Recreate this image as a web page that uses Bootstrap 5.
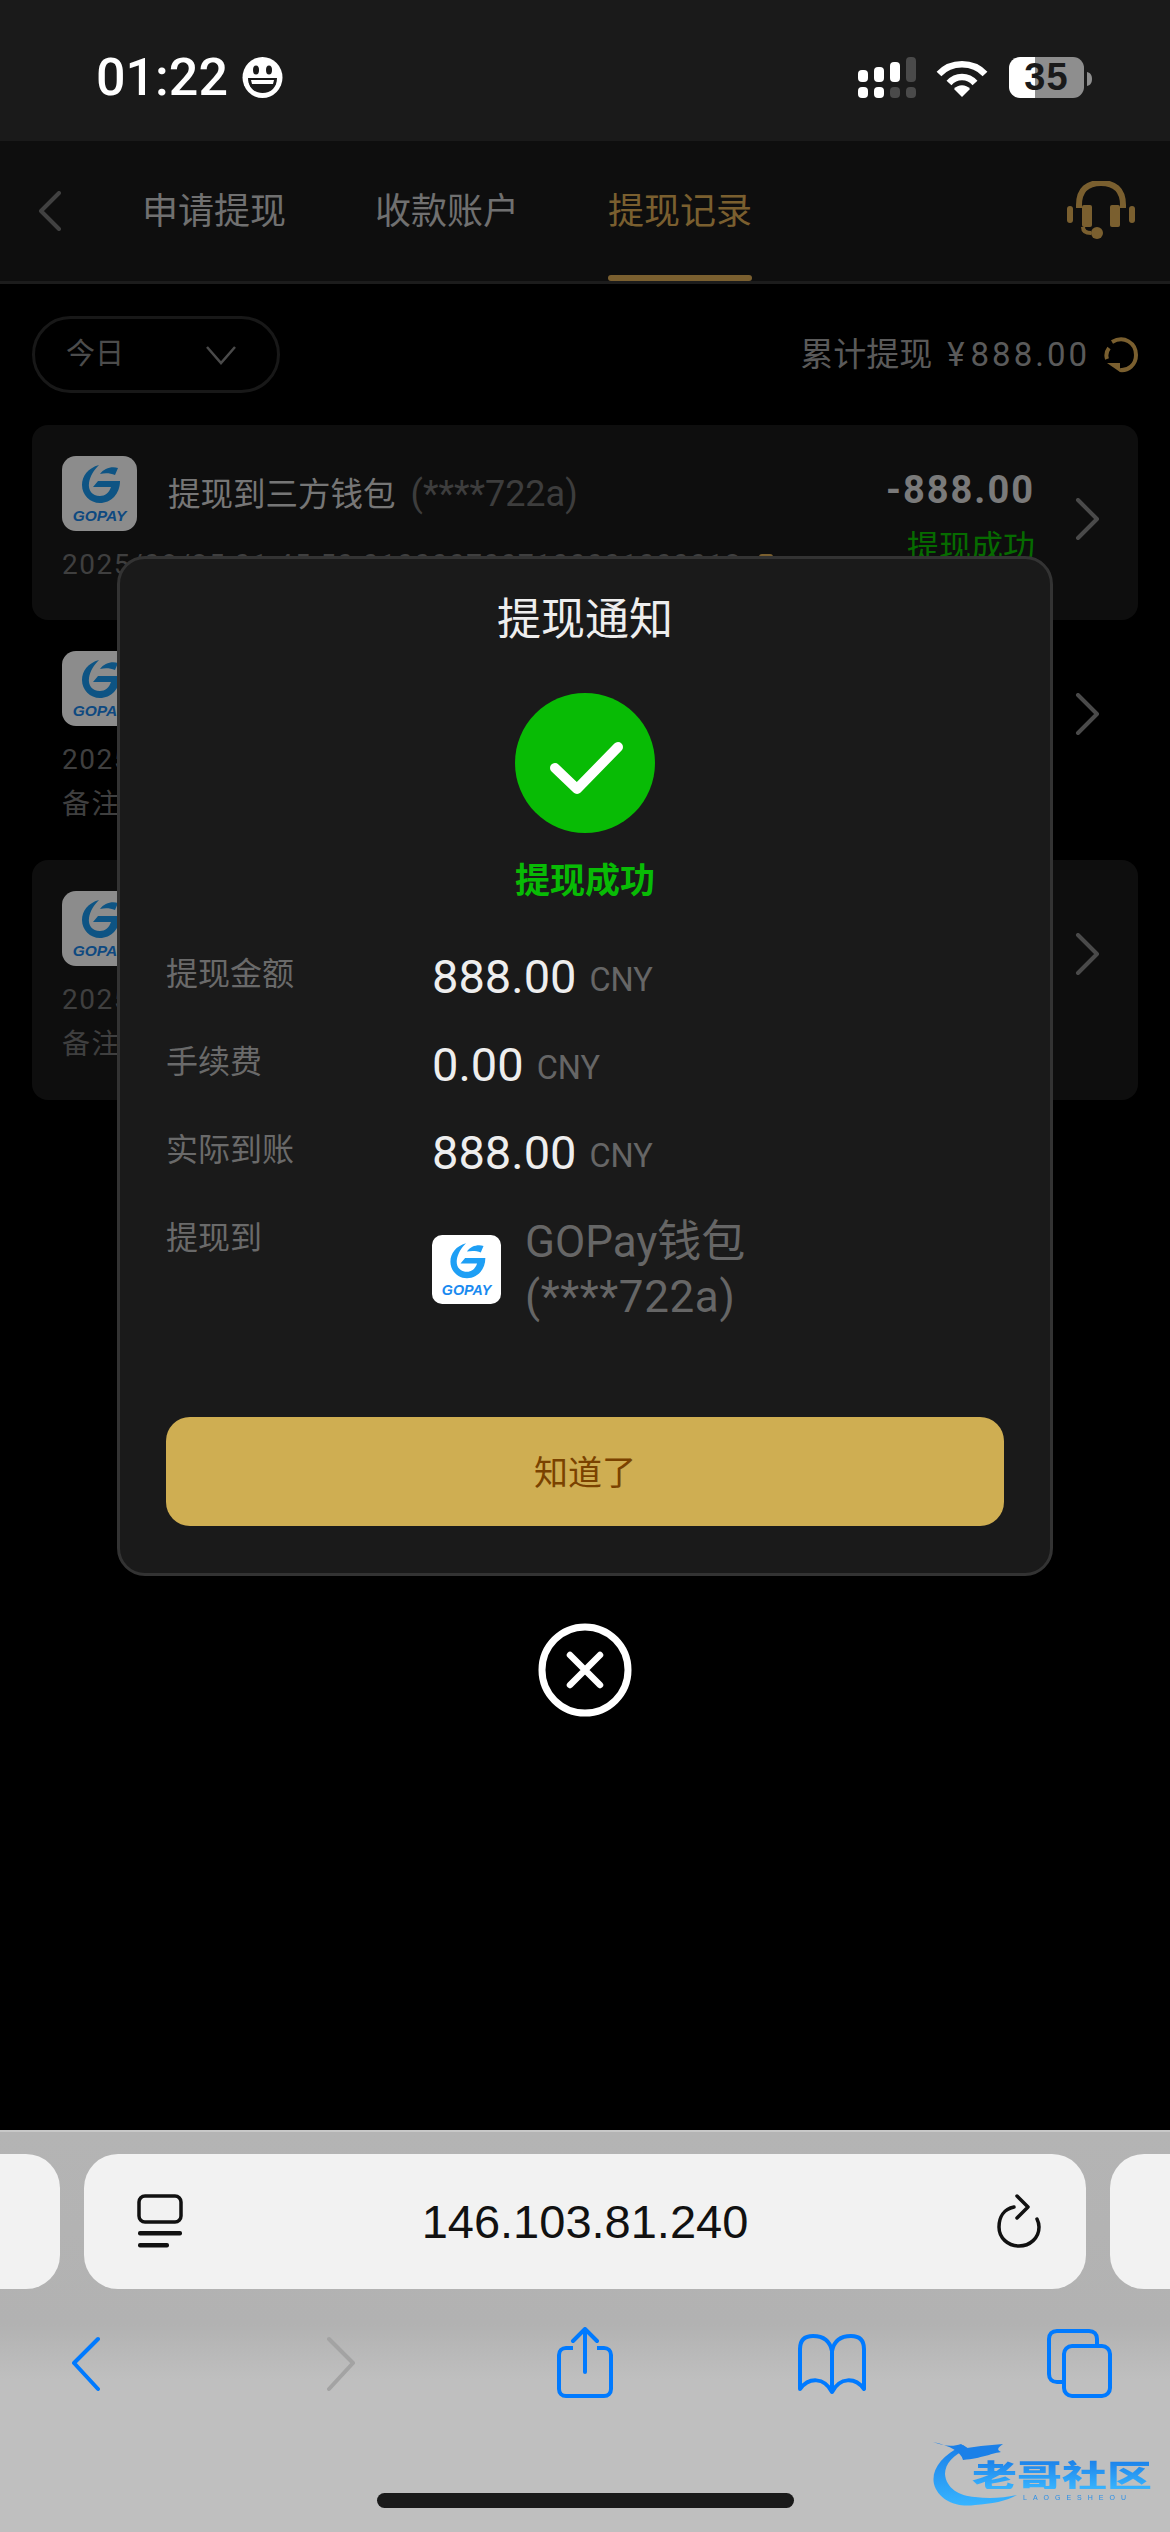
<!DOCTYPE html>
<html lang="zh-CN">
<head>
<meta charset="utf-8">
<title>提现记录</title>
<link href="https://cdn.jsdelivr.net/npm/bootstrap@5.3.0/dist/css/bootstrap.min.css" rel="stylesheet">
<style>
html,body{margin:0;background:#000}
body{width:1170px;height:2532px;overflow:hidden;font-family:Roboto,"Noto Sans CJK SC",sans-serif;color:#ddd}
svg{display:block;flex-shrink:0}
.shell{width:1170px;height:2532px}
.stat-bar{height:141px;background:#1a1a1a;padding:57px 0 0 96px;flex-shrink:0}
.clock{font:500 52px/41px Roboto,sans-serif;color:#fff;width:146px}
.batt{width:75px;height:41px;border-radius:11px;background:linear-gradient(90deg,#fff 0 26px,#8e8e8e 26px);color:#1a1a1a;font:700 38px/41px "Liberation Sans",sans-serif;letter-spacing:1px;text-align:center}
.main-area{height:1989px}
.top-nav{height:143px;background:#1a1a1a;border-bottom:3px solid #333;flex-shrink:0;padding:0 35px 0 38px}
.tab-item{font-size:36px;line-height:50px;color:#ccc;width:144px;margin-right:89px;white-space:nowrap;height:140px;padding-top:46px;position:relative}
.tab-on{color:#deae57}
.tab-on::after{content:"";position:absolute;left:0;right:0;bottom:0;height:6px;border-radius:3px;background:#deae57}
.filter-row{padding:32px 32px 32px}
.pill-select{width:248px;height:77px;border:3px solid #2c2c2c;border-radius:39px;padding:0 40px 0 31px;color:#8a8a8a;font-size:29px}
.sum-text{font-size:33px;color:#a5a5a5;line-height:40px}
.sum-num{letter-spacing:3px;margin-left:6px}
.rec-list{margin:0 32px}
.rec-row{padding:31px 38px 35px 30px;border-radius:16px}
.rec-row.tone{background:#1a1a1a}
.ico-box{width:75px;height:75px}
.rec-title{font-size:32.500px;line-height:40px;color:#d8d8d8;margin-left:31px;margin-top:18px;white-space:nowrap}
.rec-title span{color:#707070;font-size:36px;margin-left:7px}
.rec-line{font-size:28px;line-height:40px;color:#737373;letter-spacing:1.500px;white-space:nowrap;margin-top:14px}
.rec-line+.rec-line{margin-top:5px}
.rec-amt{font:700 38px/44px Roboto,sans-serif;color:#dedede;margin-top:12px;letter-spacing:2px}
.rec-stat{font-size:32px;line-height:40px;color:#0cc300;margin-top:15px}
.chev-r{margin:42px 0 0 40px}
.scrim{background:rgba(0,0,0,.45);padding-top:415px}
.dialog{width:936px;height:1020px;background:#1a1a1a;border:3px solid #333;border-radius:28px;padding:31px 46px 0}
.dlg-title{font-size:44px;line-height:60px;color:#eee;text-align:center}
.ok-ring{margin:43px auto 0}
.ok-text{font-size:35px;line-height:50px;font-weight:700;color:#08bb05;text-align:center;margin:24px 0 43px}
.info-row{height:88px}
.info-key{width:266px;font-size:32px;line-height:44px;color:#6a6a6a;flex-shrink:0;padding-top:2px}
.info-val{font:400 47px/54px Roboto,sans-serif;color:#eee}
.info-unit{font:400 32.500px/54px Roboto,sans-serif;color:#666;margin-left:13px;padding-top:3px}
.info-wallet{font-size:44px;line-height:55px;color:#666;margin-left:24px;padding-top:1px}
.masked-id{letter-spacing:.6px}
.know-btn{height:109px;margin-top:92px;padding-top:9px;background:#cfae52;border:0;border-radius:24px;color:#7a4200;font-size:34px}
.know-btn:hover{background:#cfae52;color:#7a4200}
.close-x{margin-top:47px}
.safari{height:402px;background:linear-gradient(#b4b4b4,#b2b2b2 48%,#bfbfbf 62%);border-top:2px solid #c8c8c8;position:relative;flex-shrink:0;overflow:hidden}
.tab-strip{padding-top:22px;gap:24px}
.addr-side{width:100px;height:135px;background:#f2f2f2;border-radius:34px;flex-shrink:0}
.addr-pill{width:1002px;height:135px;background:#f2f2f2;border-radius:34px;flex-shrink:0;padding:0 44px 0 53px}
.addr-text{font:400 47px/60px "Liberation Sans",sans-serif;color:#111;margin-right:9px}
.tool-row{margin-top:38px}
.m-a{margin-left:72px}.m-b{margin-left:227px}.m-c{margin-left:202px}.m-d{margin-left:184px}.m-e{margin-left:180px}
.home-bar{position:absolute;left:377px;top:361px;width:417px;height:15px;border-radius:8px;background:#1a1a1a}
.wm{position:absolute;left:931px;top:306px;width:230px;height:70px;filter:blur(.7px)}
.wm-art{position:absolute;left:0;top:0}
.wm-cn{position:absolute;left:41px;top:21px;font:900 45px/44px "Noto Sans CJK SC",sans-serif;white-space:nowrap;transform:scaleY(.68);transform-origin:0 0;background:linear-gradient(#1b7fe8,#37b4ff);-webkit-background-clip:text;background-clip:text;color:transparent}
.wm-en{position:absolute;left:92px;top:55px;font:400 7px/9px "Liberation Sans",sans-serif;letter-spacing:6px;color:#2a8fe8;white-space:nowrap}
</style>
</head>
<body>
<div class="shell d-flex flex-column">
  <div class="stat-bar d-flex">
    <div class="clock">01:22</div>
    <svg width="41" height="41" viewBox="0 0 41 41"><ellipse cx="20.500" cy="20.500" rx="20" ry="20.500" fill="#fff"/><ellipse cx="14" cy="13" rx="3" ry="4.500" fill="#1a1a1a"/><ellipse cx="27" cy="13" rx="3" ry="4.500" fill="#1a1a1a"/><path d="M6 21H35C35 30 29 36 20.500 36S6 30 6 21Z" fill="#1a1a1a"/><path d="M9 23H32L31 27H10Z" fill="#fff"/></svg>
    <svg class="ms-auto" width="60" height="42" viewBox="0 0 60 42" style="margin-right:20px">
      <rect x="2" y="13" width="10" height="12" rx="4" fill="#fff"/><rect x="18" y="10" width="10" height="15" rx="4" fill="#fff"/><rect x="34" y="5" width="10" height="20" rx="4" fill="#fff"/><rect x="50" y="0" width="10" height="25" rx="4" fill="#4a4a4a"/>
      <rect x="2" y="30" width="10" height="11" rx="4" fill="#fff"/><rect x="18" y="30" width="10" height="11" rx="4" fill="#fff"/><rect x="34" y="30" width="10" height="11" rx="4" fill="#4a4a4a"/><rect x="50" y="30" width="10" height="11" rx="4" fill="#4a4a4a"/>
    </svg>
    <svg width="52" height="40" viewBox="0 0 52 40" style="margin-right:21px;margin-top:2px"><path d="M3 15C15 2 37 2 49 15" fill="none" stroke="#fff" stroke-width="6.500" stroke-linecap="butt"/><path d="M13 24C20 16 32 16 39 24" fill="none" stroke="#fff" stroke-width="6.500"/><path d="M18 30C22 25 30 25 34 30L26 38Z" fill="#fff"/></svg>
    <div class="batt">35</div>
    <svg width="6" height="14" viewBox="0 0 6 14" style="margin:15px 77px 0 3px"><path d="M0 0C4 1 5 4 5 7S4 13 0 14Z" fill="#8e8e8e"/></svg>
  </div>

  <div class="main-area position-relative">
    <div class="top-nav d-flex align-items-start">
      <svg width="24" height="40" viewBox="0 0 24 40" style="margin:50px 80px 0 0"><path d="M21 2 3 20 21 38" fill="none" stroke="#777" stroke-width="4" stroke-linecap="round" stroke-linejoin="round"/></svg>
      <div class="tab-item">申请提现</div>
      <div class="tab-item">收款账户</div>
      <div class="tab-item tab-on">提现记录</div>
      <svg class="ms-auto" width="68" height="60" viewBox="0 0 68 60" style="margin-top:40px">
        <path d="M12 27V24C12 8 21 2 34 2S56 8 56 24V27" fill="none" stroke="#deae57" stroke-width="6"/>
        <rect x="15" y="24" width="10" height="22" rx="2" fill="#deae57"/><rect x="43" y="24" width="10" height="22" rx="2" fill="#deae57"/>
        <rect x="0" y="25" width="6" height="17" rx="3" fill="#deae57"/><rect x="62" y="25" width="6" height="17" rx="3" fill="#deae57"/>
        <path d="M16 46C16 50 19 52 24 52" fill="none" stroke="#deae57" stroke-width="4"/><circle cx="30" cy="52" r="6" fill="#deae57"/>
      </svg>
    </div>

    <div class="filter-row d-flex align-items-center justify-content-between">
      <div class="pill-select d-flex align-items-center justify-content-between">
        <span>今日</span>
        <svg width="32" height="20" viewBox="0 0 32 20"><path d="M2 2 16 18 30 2" fill="none" stroke="#888" stroke-width="2.500"/></svg>
      </div>
      <div class="d-flex align-items-center">
        <span class="sum-text">累计提现</span>
        <span class="sum-text" style="margin-left:15px">¥</span>
        <span class="sum-text sum-num">888.00</span>
        <svg width="34" height="36" viewBox="0 0 34 36" style="margin-left:14px"><path d="M8 5C20 -2 32 6 32 18C32 28 24 34 16 33" fill="none" stroke="#deae57" stroke-width="4"/><path d="M5 11C2 15 2 19 3 22" fill="none" stroke="#deae57" stroke-width="4"/><path d="M3 26 16 26 16 35Z" fill="#deae57"/></svg>
      </div>
    </div>

    <div class="rec-list">
      <div class="rec-row tone d-flex align-items-start">
        <div class="flex-grow-1">
          <div class="d-flex align-items-start">
            <svg class="ico-box" viewBox="0 0 75 75"><rect width="75" height="75" rx="14" fill="#fff"/><path d="M37 9C26 12 20 20 20 29C20 39 28 47 38 47C49 47 58 38 58 25L36 25 31 31 49 31C47 37 43 40 38 40C30 40 26 34 27 27C28 20 32 14 37 9Z" fill="#1b9af0"/><path d="M38 18C42 12 50 10 56 12L53 19C48 17 43 17 38 18Z" fill="#1b9af0"/><text x="37.500" y="65" text-anchor="middle" font-family="Liberation Sans" font-weight="700" font-style="italic" font-size="15.500" fill="#1a86ea">GOPAY</text></svg>
            <div class="rec-title">提现到三方钱包 <span>(****722a)</span></div>
          </div>
          <div class="rec-line d-flex align-items-start">2025/08/25 01:45:50 0100007007100001000012<svg width="16" height="22" viewBox="0 0 16 22" style="margin:8px 0 0 16px"><rect x="1" y="1" width="14" height="20" rx="3" fill="#deae57"/></svg></div>
        </div>
        <div class="text-end">
          <div class="rec-amt">-888.00</div>
          <div class="rec-stat">提现成功</div>
        </div>
        <svg class="chev-r" width="25" height="42" viewBox="0 0 25 42"><path d="M3 2 22 21 3 40" fill="none" stroke="#888" stroke-width="4" stroke-linecap="round" stroke-linejoin="round"/></svg>
      </div>

      <div class="rec-row d-flex align-items-start">
        <div class="flex-grow-1">
          <div class="d-flex align-items-start">
            <svg class="ico-box" viewBox="0 0 75 75"><rect width="75" height="75" rx="14" fill="#fff"/><path d="M37 9C26 12 20 20 20 29C20 39 28 47 38 47C49 47 58 38 58 25L36 25 31 31 49 31C47 37 43 40 38 40C30 40 26 34 27 27C28 20 32 14 37 9Z" fill="#1b9af0"/><path d="M38 18C42 12 50 10 56 12L53 19C48 17 43 17 38 18Z" fill="#1b9af0"/><text x="37.500" y="65" text-anchor="middle" font-family="Liberation Sans" font-weight="700" font-style="italic" font-size="15.500" fill="#1a86ea">GOPAY</text></svg>
            <div class="rec-title">提现到三方钱包 <span>(****722a)</span></div>
          </div>
          <div class="rec-line">2025/08/25 01:30:12</div>
          <div class="rec-line">备注</div>
        </div>
        <div class="text-end">
          <div class="rec-amt">-888.00</div>
          <div class="rec-stat">提现成功</div>
        </div>
        <svg class="chev-r" width="25" height="42" viewBox="0 0 25 42"><path d="M3 2 22 21 3 40" fill="none" stroke="#888" stroke-width="4" stroke-linecap="round" stroke-linejoin="round"/></svg>
      </div>

      <div class="rec-row tone d-flex align-items-start">
        <div class="flex-grow-1">
          <div class="d-flex align-items-start">
            <svg class="ico-box" viewBox="0 0 75 75"><rect width="75" height="75" rx="14" fill="#fff"/><path d="M37 9C26 12 20 20 20 29C20 39 28 47 38 47C49 47 58 38 58 25L36 25 31 31 49 31C47 37 43 40 38 40C30 40 26 34 27 27C28 20 32 14 37 9Z" fill="#1b9af0"/><path d="M38 18C42 12 50 10 56 12L53 19C48 17 43 17 38 18Z" fill="#1b9af0"/><text x="37.500" y="65" text-anchor="middle" font-family="Liberation Sans" font-weight="700" font-style="italic" font-size="15.500" fill="#1a86ea">GOPAY</text></svg>
            <div class="rec-title">提现到三方钱包 <span>(****722a)</span></div>
          </div>
          <div class="rec-line">2025/08/25 01:12:08</div>
          <div class="rec-line">备注</div>
        </div>
        <div class="text-end">
          <div class="rec-amt">-888.00</div>
          <div class="rec-stat">提现成功</div>
        </div>
        <svg class="chev-r" width="25" height="42" viewBox="0 0 25 42"><path d="M3 2 22 21 3 40" fill="none" stroke="#888" stroke-width="4" stroke-linecap="round" stroke-linejoin="round"/></svg>
      </div>
    </div>

    <div class="scrim position-absolute top-0 start-0 w-100 h-100 d-flex flex-column align-items-center">
      <div class="dialog flex-shrink-0">
        <div class="dlg-title">提现通知</div>
        <svg class="ok-ring" width="140" height="140" viewBox="0 0 140 140"><circle cx="70" cy="70" r="70" fill="#08bb05"/><path d="M40 75 62 96 103 54" fill="none" stroke="#fff" stroke-width="10" stroke-linecap="round" stroke-linejoin="round"/></svg>
        <div class="ok-text">提现成功</div>
        <div class="info-row d-flex"><div class="info-key">提现金额</div><div class="info-val">888.00</div><div class="info-unit">CNY</div></div>
        <div class="info-row d-flex"><div class="info-key">手续费</div><div class="info-val">0.00</div><div class="info-unit">CNY</div></div>
        <div class="info-row d-flex"><div class="info-key">实际到账</div><div class="info-val">888.00</div><div class="info-unit">CNY</div></div>
        <div class="d-flex align-items-start">
          <div class="info-key">提现到</div>
          <svg width="69" height="69" viewBox="0 0 75 75" style="margin-top:21px"><rect width="75" height="75" rx="11" fill="#fff"/><path d="M37 9C26 12 20 20 20 29C20 39 28 47 38 47C49 47 58 38 58 25L36 25 31 31 49 31C47 37 43 40 38 40C30 40 26 34 27 27C28 20 32 14 37 9Z" fill="#1e9ff5"/><path d="M38 18C42 12 50 10 56 12L53 19C48 17 43 17 38 18Z" fill="#1e9ff5"/><text x="37.500" y="65" text-anchor="middle" font-family="Liberation Sans" font-weight="700" font-style="italic" font-size="15.500" fill="#1a8af0">GOPAY</text></svg>
          <div class="info-wallet">GOPay钱包<br><span class="masked-id">(****722a)</span></div>
        </div>
        <button type="button" class="btn know-btn w-100">知道了</button>
      </div>
      <svg class="close-x" width="94" height="94" viewBox="0 0 94 94"><circle cx="47" cy="47" r="43" fill="none" stroke="#fff" stroke-width="7"/><path d="M32 32 62 62M62 32 32 62" stroke="#fff" stroke-width="6.500" stroke-linecap="round"/></svg>
    </div>
  </div>

  <div class="safari">
    <div class="tab-strip d-flex justify-content-center">
      <div class="addr-side"></div>
      <div class="addr-pill d-flex align-items-center justify-content-between">
        <svg width="46" height="56" viewBox="0 0 46 56"><rect x="2" y="2" width="42" height="26" rx="6" fill="none" stroke="#111" stroke-width="3.500"/><rect x="1" y="37" width="44" height="4.500" rx="2" fill="#111"/><rect x="1" y="49" width="31" height="4.500" rx="2" fill="#111"/></svg>
        <div class="addr-text">146.103.81.240</div>
        <svg width="46" height="56" viewBox="0 0 46 56"><path d="M18 13C8 15 3 23 3 33C3 44 12 52 23 52S43 44 43 33C43 30 42 27 41 25" fill="none" stroke="#111" stroke-width="3.500" stroke-linecap="round"/><path d="M21 2 32 13 21 24" fill="none" stroke="#111" stroke-width="3.500" stroke-linecap="round" stroke-linejoin="round"/></svg>
      </div>
      <div class="addr-side"></div>
    </div>
    <div class="tool-row d-flex align-items-start">
      <svg class="m-a" width="28" height="71" viewBox="0 0 28 71"><path d="M26 12 2 36 26 62" fill="none" stroke="#007aff" stroke-width="4" stroke-linecap="round" stroke-linejoin="round"/></svg>
      <svg class="m-b" width="28" height="71" viewBox="0 0 28 71"><path d="M2 12 26 36 2 62" fill="none" stroke="#a3a3a3" stroke-width="4" stroke-linecap="round" stroke-linejoin="round"/></svg>
      <svg class="m-c" width="56" height="71" viewBox="0 0 56 71"><path d="M16 21H9C5 21 2 24 2 28V62C2 66 5 69 9 69H47C51 69 54 66 54 62V28C54 24 51 21 47 21H40" fill="none" stroke="#007aff" stroke-width="4"/><path d="M28 45V2M16 14 28 2 40 14" fill="none" stroke="#007aff" stroke-width="4" stroke-linecap="round" stroke-linejoin="round"/></svg>
      <svg class="m-d" width="70" height="71" viewBox="0 0 70 71"><path d="M35 24C33 14 26 9 16 9C8 9 3 13 3 22V62C12 50 27 50 35 65C43 50 58 50 67 62V22C67 13 62 9 54 9C44 9 37 14 35 24ZM35 24V65" fill="none" stroke="#007aff" stroke-width="4" stroke-linejoin="round"/></svg>
      <svg class="m-e" width="65" height="71" viewBox="0 0 65 71"><path d="M16 55H10C5 55 2 52 2 47V12C2 7 5 4 10 4H42C47 4 50 7 50 12V19" fill="none" stroke="#007aff" stroke-width="4"/><rect x="17" y="19" width="46" height="50" rx="8" fill="none" stroke="#007aff" stroke-width="4"/></svg>
    </div>
    <div class="home-bar"></div>
    <div class="wm">
      <svg class="wm-art" width="92" height="70" viewBox="0 0 92 70"><defs><linearGradient id="wmg" x1="0" y1="0" x2="0" y2="1"><stop offset="0" stop-color="#1b7fe8"/><stop offset="1" stop-color="#37b4ff"/></linearGradient></defs><path d="M32 7C10 18 0 32 3 46C7 61 24 70 44 67C60 66 76 63 86 57C72 60 58 61 44 59C28 58 15 50 14 36C14 26 22 16 38 11Z" fill="url(#wmg)"/><path d="M2 4C12 8 22 9 30 6L36 10 50 8 72 6C66 10 66 12 70 14C58 16 52 20 32 22C30 14 20 8 2 4Z" fill="#1b80e8"/></svg>
      <div class="wm-cn">老哥社区</div>
      <div class="wm-en">LAOGESHEOU</div>
    </div>
  </div>
</div>
<script src="https://cdn.jsdelivr.net/npm/bootstrap@5.3.0/dist/js/bootstrap.bundle.min.js"></script>
</body>
</html>
